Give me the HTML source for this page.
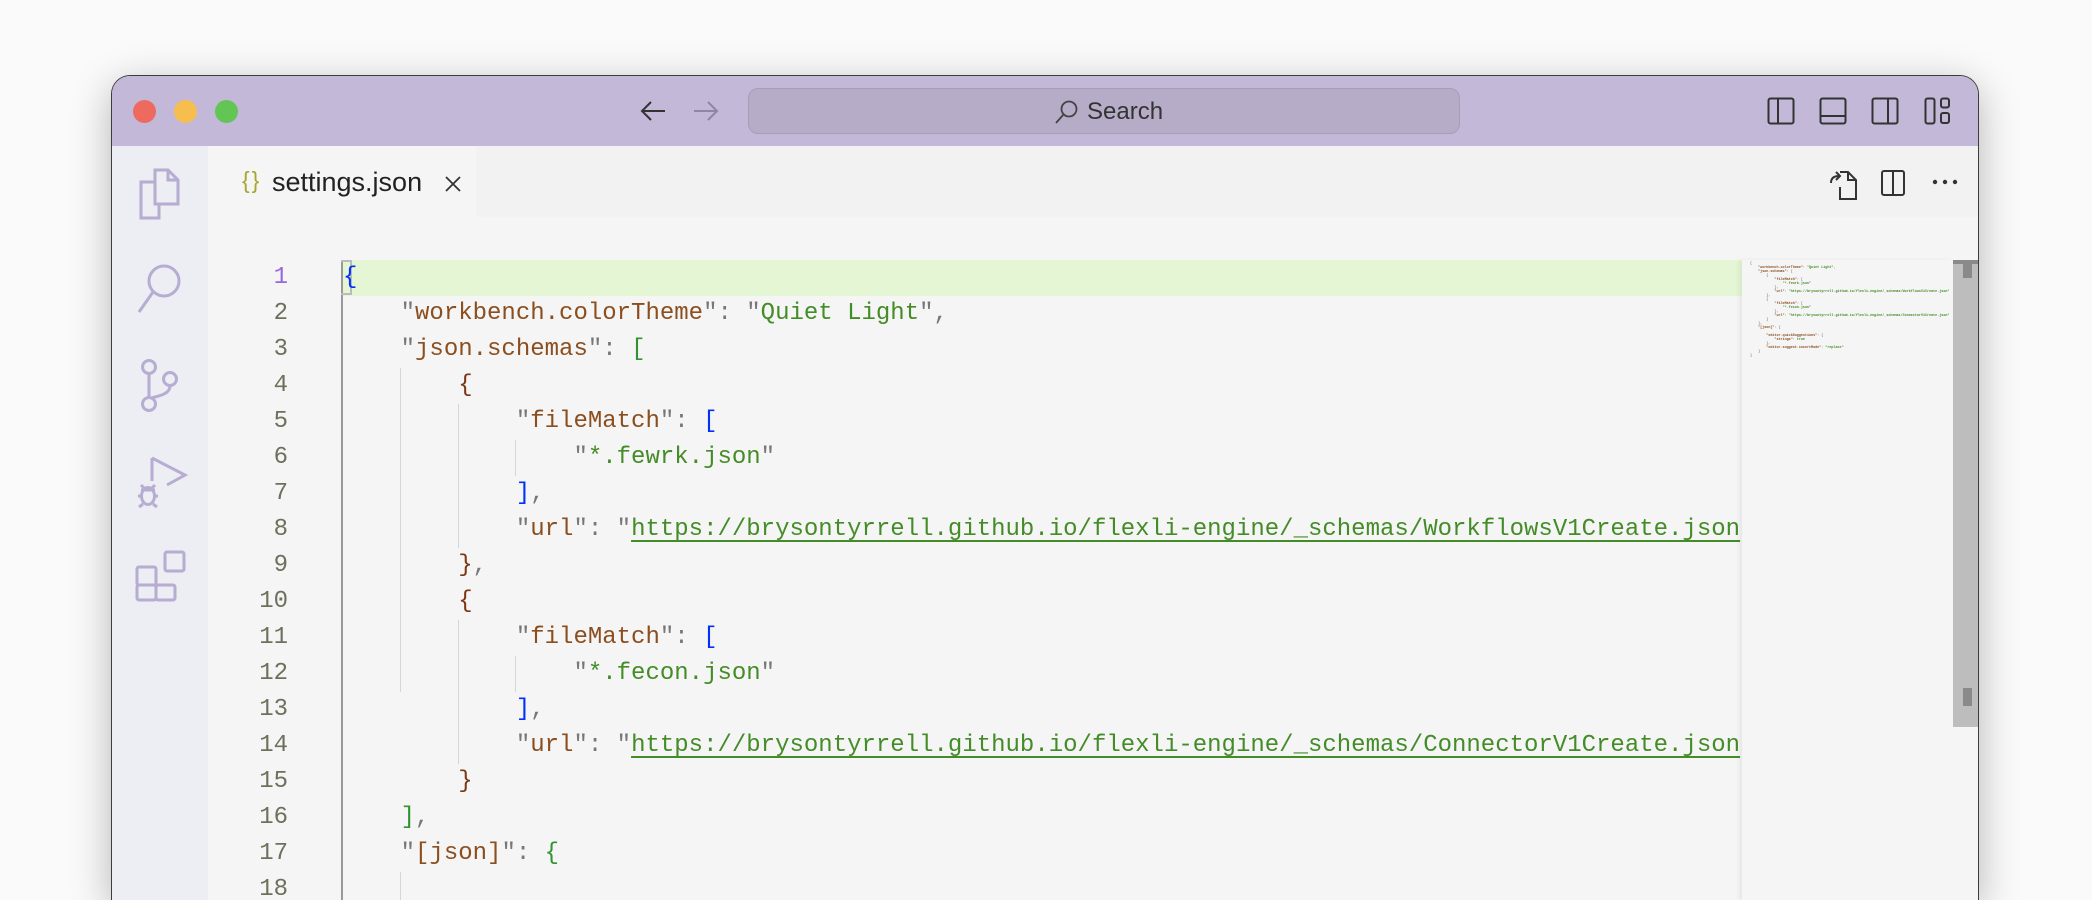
<!DOCTYPE html>
<html><head><meta charset="utf-8"><style>
*{margin:0;padding:0;box-sizing:border-box}
html,body{width:2092px;height:900px;overflow:hidden}
body{background:#fafafa;position:relative;font-family:"Liberation Sans",sans-serif}
.win{position:absolute;left:111px;top:75px;width:1868px;height:825px;border:1.5px solid #3c3c3c;border-bottom:none;border-radius:19px 19px 0 0;overflow:hidden;background:#f5f5f5;box-shadow:0 10px 40px rgba(0,0,0,.28)}
.title{position:absolute;left:0;top:0;width:100%;height:70px;background:#c3b8d7}
.dot{position:absolute;top:24px;width:23px;height:23px;border-radius:50%}
.search{position:absolute;left:636px;top:12px;width:712px;height:46px;border-radius:10px;background:#b6acc8;border:1.5px solid #a89dbb}
.search span{position:absolute;left:338px;top:9px;font-size:24px;color:#333}
.act{position:absolute;left:0;top:70px;width:96px;height:760px;background:#ededf4}
.tabbar{position:absolute;left:96px;top:70px;right:0;height:71px;background:#f2f2f2}
.tab{position:absolute;left:0;top:0;width:268px;height:71px;background:#f5f5f5}
.ln{position:absolute;width:60px;text-align:right;font-family:"Liberation Mono",monospace;font-size:24px;color:#6d705b;line-height:36px}
.code{position:absolute;left:230px;font-family:"Liberation Mono",monospace;font-size:24px;line-height:36px;white-space:pre;color:#333}
.k{color:#8b4e1f}.s{color:#448c27}.p{color:#777}.b1{color:#0431fa}.b2{color:#319331}.b3{color:#7b3814}
.u{text-decoration:underline;text-underline-offset:5px;text-decoration-thickness:2px}
.g{position:absolute;width:1px;background:#d6d6d6}
.mm{position:absolute;left:1630px;top:184px;width:211px;height:640px;background:#f5f5f5;box-shadow:-3px 0 4px rgba(0,0,0,.06);overflow:hidden}
.mmt{position:absolute;left:8px;top:2px;font-family:"Liberation Mono",monospace;font-size:3.4px;line-height:4px;white-space:pre;color:#888;font-weight:bold}
.sb{position:absolute;left:1841px;top:184px;width:27px;height:467px;background:#bdbdbd}
</style></head><body>
<div class="win">
 <div class="title">
  <div class="dot" style="left:21px;background:#ee6a5f"></div>
  <div class="dot" style="left:62px;background:#f5be4f"></div>
  <div class="dot" style="left:103px;background:#62c554"></div>
  <svg style="position:absolute;left:527px;top:24px" width="28" height="22" viewBox="0 0 28 22"><path d="M26 11H3M12 2L3 11l9 9" fill="none" stroke="#333" stroke-width="2"/></svg>
  <svg style="position:absolute;left:580px;top:24px" width="28" height="22" viewBox="0 0 28 22"><path d="M2 11h23M16 2l9 9-9 9" fill="none" stroke="#8f86a2" stroke-width="2"/></svg>
  <div class="search"><svg style="position:absolute;left:304px;top:10px" width="26" height="26" viewBox="0 0 26 26"><circle cx="16" cy="10" r="7.5" fill="none" stroke="#444" stroke-width="1.8"/><path d="M10.5 15.5L3 24" stroke="#444" stroke-width="1.8"/></svg><span>Search</span></div>
  <svg style="position:absolute;left:1655px;top:21px" width="28" height="28" viewBox="0 0 28 28"><rect x="1.5" y="1.5" width="25" height="25" rx="2" fill="none" stroke="#333" stroke-width="2"/><path d="M11 2v24" stroke="#333" stroke-width="2"/></svg>
  <svg style="position:absolute;left:1707px;top:21px" width="28" height="28" viewBox="0 0 28 28"><rect x="1.5" y="1.5" width="25" height="25" rx="2" fill="none" stroke="#333" stroke-width="2"/><path d="M2 19h24" stroke="#333" stroke-width="2"/></svg>
  <svg style="position:absolute;left:1759px;top:21px" width="28" height="28" viewBox="0 0 28 28"><rect x="1.5" y="1.5" width="25" height="25" rx="2" fill="none" stroke="#333" stroke-width="2"/><path d="M17 2v24" stroke="#333" stroke-width="2"/></svg>
  <svg style="position:absolute;left:1812px;top:21px" width="28" height="28" viewBox="0 0 28 28"><rect x="1.5" y="1.5" width="9" height="25" rx="2" fill="none" stroke="#333" stroke-width="2"/><rect x="17" y="1.5" width="8" height="9" rx="2" fill="none" stroke="#333" stroke-width="2"/><rect x="17" y="16" width="8" height="10" rx="2" fill="none" stroke="#333" stroke-width="2"/></svg>
 </div>
 <div class="act">
  <svg style="position:absolute;left:26px;top:22px" width="46" height="54" viewBox="0 0 46 54" fill="none" stroke="#b7acd2" stroke-width="3"><path d="M17 2h13l10 10v24H17z"/><path d="M30 2v10h10"/><path d="M17 14H3v36h18v-14"/></svg>
  <svg style="position:absolute;left:24px;top:117px" width="48" height="52" viewBox="0 0 48 52" fill="none" stroke="#b7acd2" stroke-width="3"><circle cx="28" cy="18" r="15"/><path d="M17 29L3 49"/></svg>
  <svg style="position:absolute;left:27px;top:213px" width="42" height="54" viewBox="0 0 42 54" fill="none" stroke="#b7acd2" stroke-width="3"><circle cx="10" cy="8" r="6.5"/><circle cx="10" cy="45" r="6.5"/><circle cx="31" cy="20" r="6.5"/><path d="M10 15v23M31 27c0 8-11 10-19 12"/></svg>
  <svg style="position:absolute;left:25px;top:308px" width="52" height="60" viewBox="0 0 52 60" fill="none" stroke="#b7acd2" stroke-width="3"><path d="M15 4v23M15 4l33 17-18 10"/><ellipse cx="11" cy="42" rx="6.5" ry="8.5"/><path d="M4 36h14M1 42h4M17 42h4M2 53l4-3M20 53l-4-3M4 31l3 3M18 31l-3 3"/></svg>
  <svg style="position:absolute;left:23px;top:404px" width="52" height="52" viewBox="0 0 52 52" fill="none" stroke="#b7acd2" stroke-width="3"><rect x="2" y="17" width="19" height="18" rx="2"/><rect x="2" y="35" width="19" height="15" rx="2"/><rect x="21" y="35" width="19" height="15" rx="2"/><rect x="30" y="2" width="19" height="19" rx="2"/></svg>
 </div>
 <div class="tabbar">
  <div class="tab">
   <span style="position:absolute;left:34px;top:21px;font-size:23px;color:#a8a62e;letter-spacing:2px">{}</span>
   <span style="position:absolute;left:64px;top:21px;font-size:27px;color:#222">settings.json</span>
   <svg style="position:absolute;left:236px;top:29px" width="18" height="18" viewBox="0 0 18 18"><path d="M2 2l14 14M16 2L2 16" stroke="#333" stroke-width="1.8"/></svg>
  </div>
  <svg style="position:absolute;left:1620px;top:23px" width="30" height="32" viewBox="0 0 30 32" fill="none" stroke="#333" stroke-width="2"><path d="M12 3h8l8 8v19H12v-12"/><path d="M20 3v8h8"/><path d="M3 14c0-5 3-7 8-7M8 3l4 4-4 4"/></svg>
  <svg style="position:absolute;left:1673px;top:24px" width="24" height="26" viewBox="0 0 24 26"><rect x="1" y="1" width="22" height="24" rx="2" fill="none" stroke="#333" stroke-width="2"/><path d="M12 1v24" stroke="#333" stroke-width="2"/></svg>
  <svg style="position:absolute;left:1724px;top:32px" width="26" height="8" viewBox="0 0 26 8" fill="#333"><circle cx="3" cy="4" r="2.2"/><circle cx="13" cy="4" r="2.2"/><circle cx="23" cy="4" r="2.2"/></svg>
 </div>
 <div style="position:absolute;left:96px;top:141px;right:0;bottom:0;background:#f5f5f5"></div>
 <div style="position:absolute;left:229px;top:184px;width:1401px;height:36px;background:#e4f6d4"></div>
 <div style="position:absolute;left:229px;top:184px;width:2px;height:640px;background:#999"></div>
 <div style="position:absolute;left:229px;top:184px;width:11px;height:35px;border:2px solid #bbb;border-left:none"></div>
 <div class="g" style="left:288px;top:292px;height:324px"></div>
 <div class="g" style="left:288px;top:796px;height:30px"></div>
 <div class="g" style="left:346px;top:328px;height:144px"></div>
 <div class="g" style="left:346px;top:544px;height:144px"></div>
 <div class="g" style="left:403px;top:364px;height:36px"></div>
 <div class="g" style="left:403px;top:580px;height:36px"></div>
 <div style="position:absolute;left:116px;top:184px;width:60px;height:640px;overflow:hidden"><div class="ln" style="left:0;top:0"><span style="color:#9769dc">1</span><br>2<br>3<br>4<br>5<br>6<br>7<br>8<br>9<br>10<br>11<br>12<br>13<br>14<br>15<br>16<br>17<br>18</div></div>
 <div style="position:absolute;left:231px;top:184px;width:1399px;height:640px;overflow:hidden">
 <div class="code" style="left:0;top:0"><span class="b1">{</span>
    <span class="p">"</span><span class="k">workbench.colorTheme</span><span class="p">": "</span><span class="s">Quiet Light</span><span class="p">",</span>
    <span class="p">"</span><span class="k">json.schemas</span><span class="p">": </span><span class="b2">[</span>
        <span class="b3">{</span>
            <span class="p">"</span><span class="k">fileMatch</span><span class="p">": </span><span class="b1">[</span>
                <span class="p">"</span><span class="s">*.fewrk.json</span><span class="p">"</span>
            <span class="b1">]</span><span class="p">,</span>
            <span class="p">"</span><span class="k">url</span><span class="p">": "</span><span class="s u">https://brysontyrrell.github.io/flexli-engine/_schemas/WorkflowsV1Create.json</span><span class="p">"</span>
        <span class="b3">}</span><span class="p">,</span>
        <span class="b3">{</span>
            <span class="p">"</span><span class="k">fileMatch</span><span class="p">": </span><span class="b1">[</span>
                <span class="p">"</span><span class="s">*.fecon.json</span><span class="p">"</span>
            <span class="b1">]</span><span class="p">,</span>
            <span class="p">"</span><span class="k">url</span><span class="p">": "</span><span class="s u">https://brysontyrrell.github.io/flexli-engine/_schemas/ConnectorV1Create.json</span><span class="p">"</span>
        <span class="b3">}</span>
    <span class="b2">]</span><span class="p">,</span>
    <span class="p">"</span><span class="k">[json]</span><span class="p">": </span><span class="b2">{</span>
</div></div>
 <div class="mm"><div class="mmt">{
    <span class="k">"workbench.colorTheme"</span>: <span class="s">"Quiet Light"</span>,
    <span class="k">"json.schemas"</span>: [
        {
            <span class="k">"fileMatch"</span>: [
                <span class="s">"*.fewrk.json"</span>
            ],
            <span class="k">"url"</span>: <span class="s">"https://brysontyrrell.github.io/flexli-engine/_schemas/WorkflowsV1Create.json"</span>
        },
        {
            <span class="k">"fileMatch"</span>: [
                <span class="s">"*.fecon.json"</span>
            ],
            <span class="k">"url"</span>: <span class="s">"https://brysontyrrell.github.io/flexli-engine/_schemas/ConnectorV1Create.json"</span>
        }
    ],
    <span class="k">"[json]"</span>: {

        <span class="k">"editor.quickSuggestions"</span>: {
            <span class="k">"strings"</span>: <span class="s">true</span>
        },
        <span class="k">"editor.suggest.insertMode"</span>: <span class="s">"replace"</span>
    }
}</div></div>
 <div class="sb"><div style="position:absolute;left:0;top:0;width:27px;height:4px;background:#8a8a8a"></div><div style="position:absolute;left:10px;top:0;width:9px;height:18px;background:#8a8a8a"></div><div style="position:absolute;left:10px;top:428px;width:9px;height:18px;background:#8a8a8a"></div></div>
</div>
</body></html>
